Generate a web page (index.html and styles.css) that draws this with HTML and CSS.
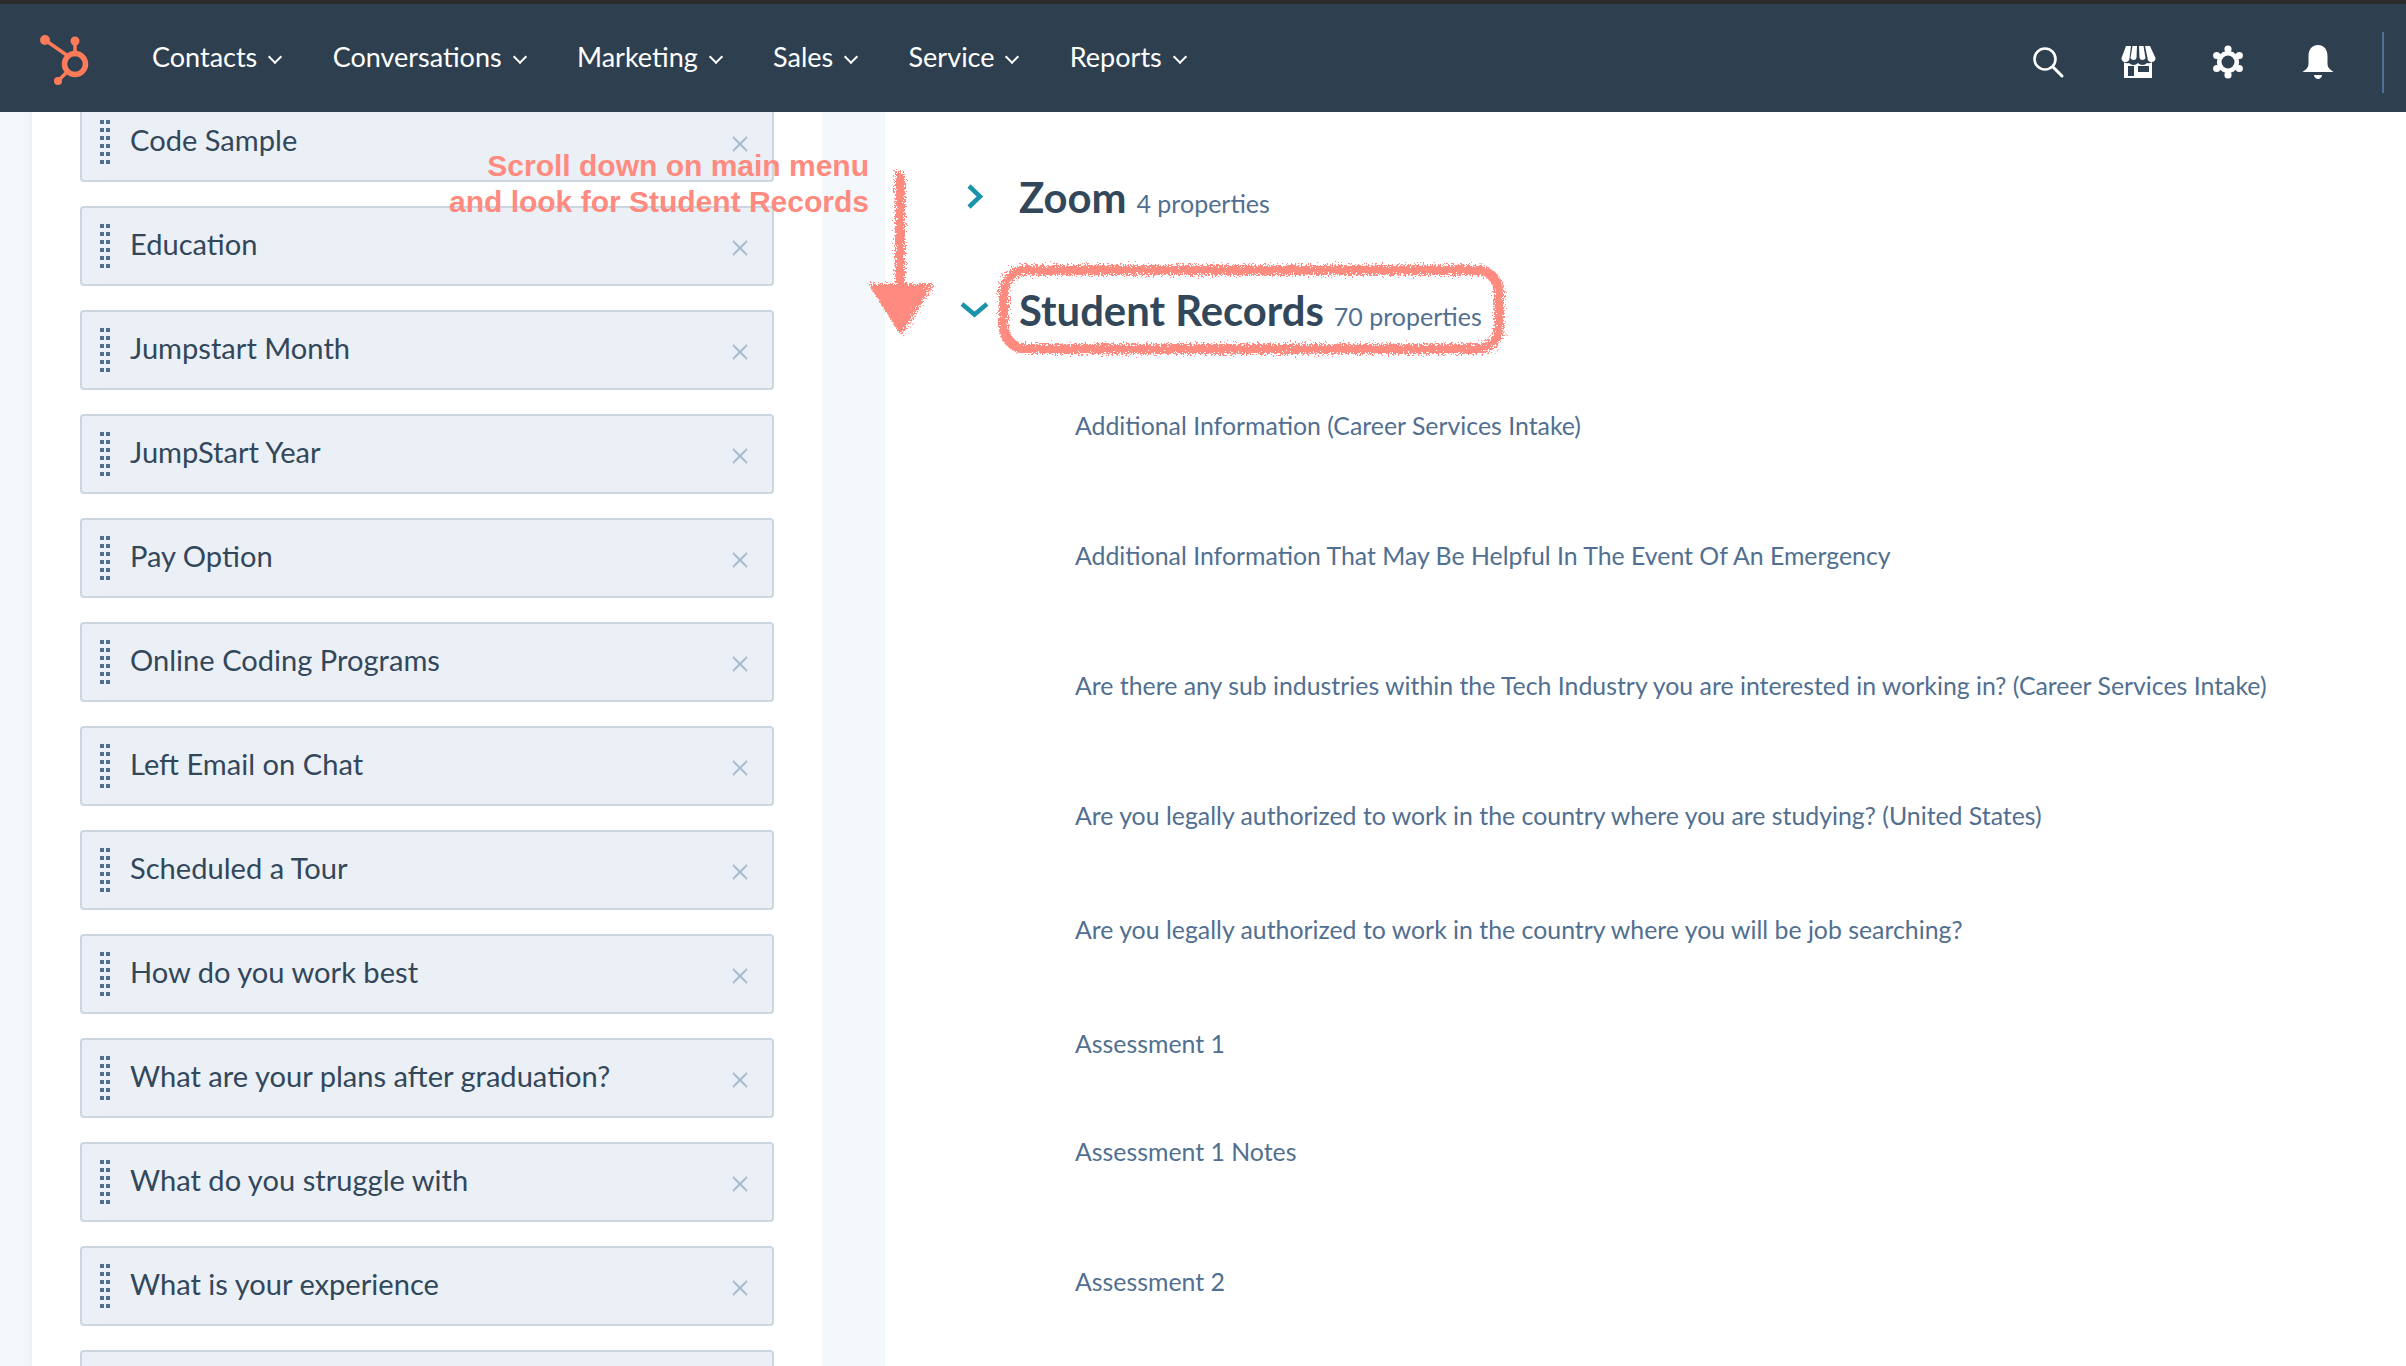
FILE: index.html
```html
<!DOCTYPE html>
<html lang="en">
<head>
  <meta charset="UTF-8" />
  <title>Student Records properties</title>
  <link rel="stylesheet" href="styles.css">
</head>
<body>
  <nav class="topnav">
    <svg class="logo" viewBox="39 34 50 52">
      <circle cx="75" cy="64" r="10.500" fill="none" stroke="#ff7a59" stroke-width="5.500"/>
      <path d="M45 40 L68 56 M75 41 V54 M66 73 L58 81" stroke="#ff7a59" stroke-width="3.500" fill="none"/>
      <circle cx="45" cy="40" r="5" fill="#ff7a59"/>
      <circle cx="75" cy="41" r="4.500" fill="#ff7a59"/>
      <circle cx="58" cy="81" r="4" fill="#ff7a59"/>
    </svg>
    <ul class="menu">
      <li>Contacts <span class="caret"></span></li>
      <li>Conversations <span class="caret"></span></li>
      <li>Marketing <span class="caret"></span></li>
      <li>Sales <span class="caret"></span></li>
      <li>Service <span class="caret"></span></li>
      <li>Reports <span class="caret"></span></li>
    </ul>
    <div class="tools">
      <svg viewBox="-2 -2 36 36"><circle cx="13" cy="13" r="10.500" fill="none" stroke="#fff" stroke-width="2.600"/><path d="M21 21 L30 30" stroke="#fff" stroke-width="3" stroke-linecap="round"/></svg>
      <svg viewBox="0 0 36 34"><path fill="#fff" d="M6 1h5l-1.500 12a3.600 3.600 0 0 1-8 0zM12.500 1h4.500l-.5 12a3.200 3.200 0 0 1-6 0zM19 1h4.500l2 12a3.200 3.200 0 0 1-6 0zM25 1h5l5.500 12a3.600 3.600 0 0 1-8 0z"/><path fill="#fff" fill-rule="evenodd" d="M4 17a6 6 0 0 0 5 1a6 6 0 0 0 9 0a6 6 0 0 0 9 0a6 6 0 0 0 5 -1v16H4zM8 21v10h6V21zM18 21v6h11v-6z"/></svg>
      <svg viewBox="-1 -1 36 36"><g fill="#fff"><circle cx="17" cy="17" r="11"/><circle cx="17" cy="4" r="3.600"/><circle cx="17" cy="30" r="3.600"/><circle cx="5.700" cy="10.500" r="3.600"/><circle cx="28.300" cy="10.500" r="3.600"/><circle cx="5.700" cy="23.500" r="3.600"/><circle cx="28.300" cy="23.500" r="3.600"/></g><circle cx="17" cy="17" r="6.500" fill="#2e3f50"/></svg>
      <svg viewBox="0 0 32 36"><path fill="#fff" d="M16 1c6.500 0 9.500 5 9.500 11v8c0 3 2 5.500 6 8H.5c4-2.500 6-5 6-8v-8C6.500 6 9.500 1 16 1z"/><path fill="#fff" d="M12 31h8c0 2-2 4-4 4s-4-2-4-4z"/></svg>
      <span class="divider"></span>
    </div>
  </nav>

  <main class="layout">
    <div class="gutter"></div>
    <section class="column-panel">
      <ul class="cards">
        <li class="card"><span class="grip"></span><span class="card-label">Code Sample</span><span class="remove"></span></li>
        <li class="card"><span class="grip"></span><span class="card-label">Education</span><span class="remove"></span></li>
        <li class="card"><span class="grip"></span><span class="card-label">Jumpstart Month</span><span class="remove"></span></li>
        <li class="card"><span class="grip"></span><span class="card-label">JumpStart Year</span><span class="remove"></span></li>
        <li class="card"><span class="grip"></span><span class="card-label">Pay Option</span><span class="remove"></span></li>
        <li class="card"><span class="grip"></span><span class="card-label">Online Coding Programs</span><span class="remove"></span></li>
        <li class="card"><span class="grip"></span><span class="card-label">Left Email on Chat</span><span class="remove"></span></li>
        <li class="card"><span class="grip"></span><span class="card-label">Scheduled a Tour</span><span class="remove"></span></li>
        <li class="card"><span class="grip"></span><span class="card-label">How do you work best</span><span class="remove"></span></li>
        <li class="card"><span class="grip"></span><span class="card-label">What are your plans after graduation?</span><span class="remove"></span></li>
        <li class="card"><span class="grip"></span><span class="card-label">What do you struggle with</span><span class="remove"></span></li>
        <li class="card"><span class="grip"></span><span class="card-label">What is your experience</span><span class="remove"></span></li>
        <li class="card"></li>
      </ul>
    </section>
    <div class="divider-strip"></div>
    <section class="properties">
      <div class="group group-zoom">
        <svg class="chevron" viewBox="0 0 18 27"><path d="M3 3 L14 13.500 L3 24" fill="none" stroke="#1b93ab" stroke-width="4.500"/></svg>
        <h2>Zoom</h2><span class="count">4 properties</span>
      </div>
      <div class="group group-records">
        <svg class="chevron chevron-open" viewBox="0 0 31 17"><path d="M3 3 L15.500 13.500 L28 3" fill="none" stroke="#1b93ab" stroke-width="4.500"/></svg>
        <h2>Student Records</h2><span class="count">70 properties</span>
      </div>
      <ul class="props">
        <li class="tall">Additional Information (Career Services Intake)</li>
        <li class="tall">Additional Information That May Be Helpful In The Event Of An Emergency</li>
        <li class="tall">Are there any sub industries within the Tech Industry you are interested in working in? (Career Services Intake)</li>
        <li class="mid">Are you legally authorized to work in the country where you are studying? (United States)</li>
        <li class="mid">Are you legally authorized to work in the country where you will be job searching?</li>
        <li class="short">Assessment 1</li>
        <li class="tall">Assessment 1 Notes</li>
        <li class="tall">Assessment 2</li>
      </ul>
    </section>
  </main>

  <p class="note">Scroll down on main menu<br>and look for Student Records</p>
  <svg class="scribble" viewBox="0 0 2406 1366">
    <defs>
      <filter id="rough" x="-5%" y="-5%" width="110%" height="110%">
        <feTurbulence type="fractalNoise" baseFrequency="0.6" numOctaves="3" seed="4"/>
        <feDisplacementMap in="SourceGraphic" scale="12"/>
      </filter>
    </defs>
    <g filter="url(#rough)" fill="none" stroke="#ff8a80">
      <path d="M900 172 V300" stroke-width="10"/>
      <path d="M872 286 H930 L901 332 Z" fill="#ff8a80" stroke-width="4"/>
      <rect x="1004" y="270" width="495" height="79" rx="22" stroke-width="10"/>
    </g>
  </svg>
</body>
</html>
```

FILE: styles.css
```css
* {
  box-sizing: border-box;
}
html, body {
  height: 100%;
}
body {
  margin: 0;
  overflow: hidden;
  font-family: Lato, "Open Sans", sans-serif;
  background: #fff;
  color: #33475b;
}
ul {
  list-style: none;
  margin: 0;
  padding: 0;
}

.topnav {
  position: relative;
  z-index: 2;
  display: flex;
  align-items: center;
  height: 112px;
  padding: 0 22px 0 39px;
  background: #2e3f50;
  border-top: 4px solid #2b2b2b;
}
.logo {
  flex: none;
  width: 50px;
  height: 52px;
  margin-top: 4px;
}
.menu {
  display: flex;
  gap: 49.400px;
  margin-left: 63px;
  margin-top: -4px;
  color: #fff;
  font-size: 27px;
}
.caret {
  display: inline-block;
  width: 10px;
  height: 10px;
  margin: 0 3px 5px 6px;
  border-right: 2px solid #fff;
  border-bottom: 2px solid #fff;
  transform: rotate(45deg);
}
.tools {
  display: flex;
  align-items: center;
  gap: 54px;
  margin-left: auto;
  margin-top: 8px;
}
.tools svg {
  width: 36px;
  height: 36px;
}
.divider {
  width: 2px;
  height: 61px;
  margin-left: -8px;
  background: #4f6f98;
}

.layout {
  display: flex;
  height: calc(100% - 112px);
}
.gutter {
  width: 32px;
  background: #f5f8fa;
}
.column-panel {
  width: 790px;
  padding: 0 48px;
  overflow: hidden;
  box-shadow: 0 0 6px rgba(203, 214, 226, .5);
}
.cards {
  display: flex;
  flex-direction: column;
  gap: 24px;
  margin-top: -10px;
}
.card {
  flex: none;
  display: flex;
  align-items: center;
  height: 80px;
  padding: 0 24px 0 18px;
  background: #eaf0f6;
  border: 2px solid #cbd6e2;
  border-radius: 4px;
}
.grip {
  flex: none;
  width: 10px;
  height: 44px;
  margin-right: 20px;
  background-image: linear-gradient(90deg, #506e91 0 4px, transparent 4px 6px, #506e91 6px 10px);
  mask-image: repeating-linear-gradient(180deg, #000 0 4px, transparent 4px 8px);
}
.card-label {
  flex: 1;
  font-size: 29.100px;
  margin-top: -6px;
}
.remove {
  position: relative;
  flex: none;
  width: 16px;
  height: 16px;
  margin-top: 4px;
}
.remove::before,
.remove::after {
  content: "";
  position: absolute;
  left: 7px;
  top: -2px;
  width: 2px;
  height: 20px;
  background: #a9bbcf;
  transform: rotate(45deg);
}
.remove::after {
  transform: rotate(-45deg);
}

.divider-strip {
  width: 63px;
  background: #f5f8fa;
}
.properties {
  flex: 1;
  padding-left: 73px;
}
.group {
  position: relative;
  display: flex;
  align-items: baseline;
  padding-left: 61px;
}
.group-zoom {
  margin-top: 61px;
}
.group-records {
  margin-top: 65px;
}
.group h2 {
  margin: 0;
  font-size: 41.800px;
  font-weight: 700;
  line-height: 48px;
}
.count {
  margin-left: 10px;
  font-size: 25px;
  color: #516f90;
}
.chevron {
  position: absolute;
  left: 8px;
  top: 10px;
  width: 18px;
  height: 27px;
}
.chevron-open {
  left: 1px;
  top: 15px;
  width: 31px;
  height: 17px;
}
.props {
  margin-top: 76px;
  padding-left: 117px;
  color: #516f90;
  font-size: 24.850px;
  line-height: 30px;
}
.props .tall {
  height: 130px;
}
.props .mid {
  height: 114px;
}
.props .short {
  height: 108px;
}

.note {
  position: absolute;
  right: 1537px;
  top: 148px;
  z-index: 3;
  margin: 0;
  font-family: "Liberation Sans", Arial, sans-serif;
  font-size: 30px;
  font-weight: 700;
  line-height: 36px;
  text-align: right;
  color: #ff8a80;
}
.scribble {
  position: absolute;
  left: 0;
  top: 0;
  z-index: 3;
  width: 2406px;
  height: 1366px;
  pointer-events: none;
}
```
